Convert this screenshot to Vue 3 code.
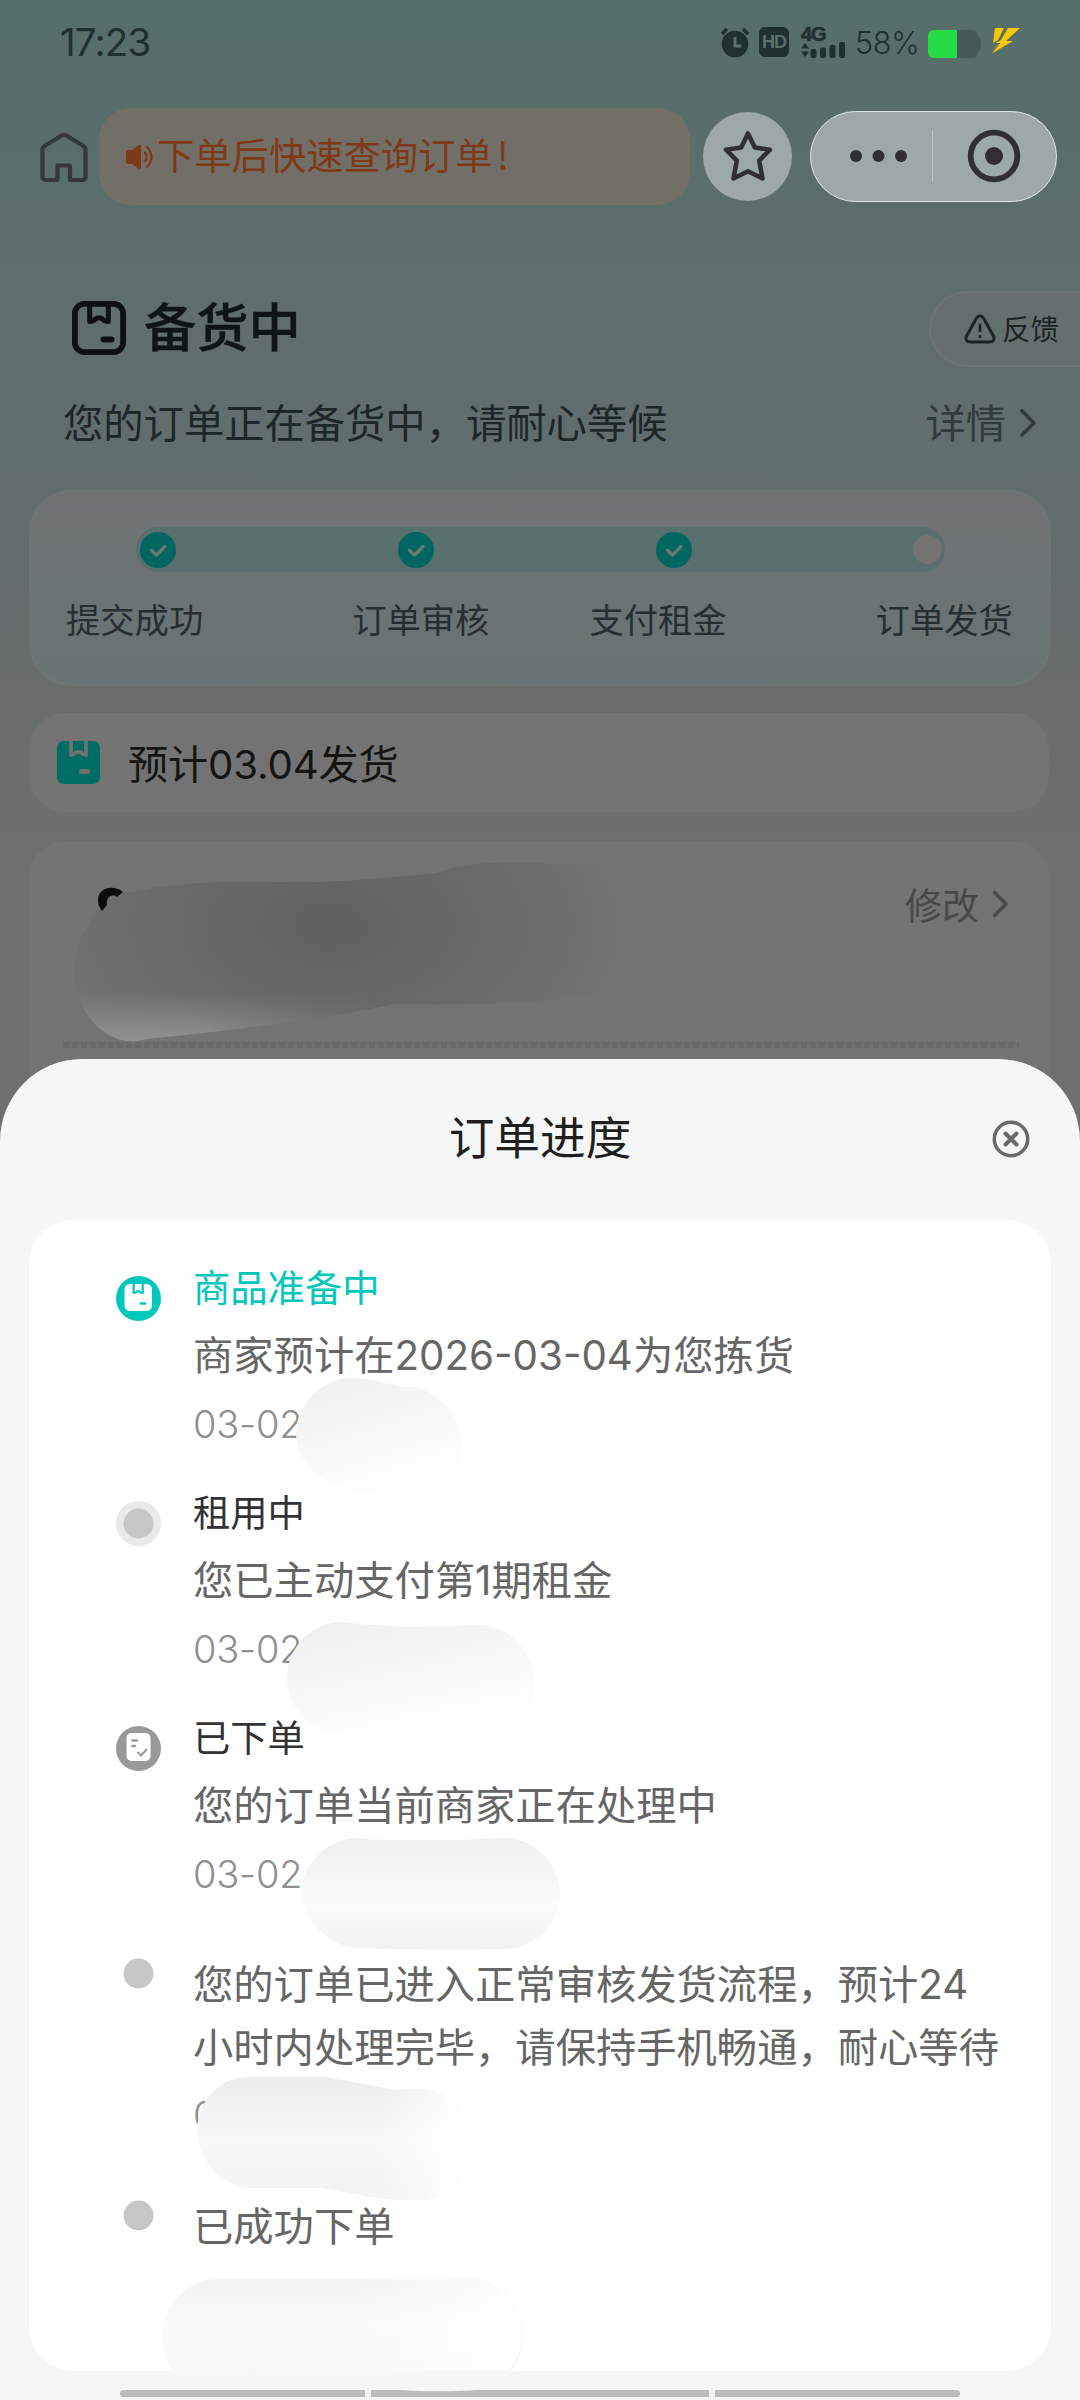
<script setup>
const steps = ['提交成功', '订单审核', '支付租金', '订单发货']
const events = [
  { icon: 'box', title: '商品准备中', active: true, text: ['商家预计在2026-03-04为您拣货'], date: '03-02' },
  { icon: 'ring', title: '租用中', text: ['您已主动支付第1期租金'], date: '03-02' },
  { icon: 'doc', title: '已下单', text: ['您的订单当前商家正在处理中'], date: '03-02' },
  { icon: 'dot', tall: true, text: ['您的订单已进入正常审核发货流程，预计24', '小时内处理完毕，请保持手机畅通，耐心等待'], date: '0' },
  { icon: 'dot', text: ['已成功下单'] },
]
</script>

<template>
  <div class="page">
    <header class="status">
      <span class="clock">17:23</span>
      <div class="status-icons">
        <svg class="alarm" width="30" height="32" viewBox="0 0 30 32">
          <circle cx="15" cy="18" r="13.3" fill="#1f3030" />
          <path d="M2 8 7 3M28 8l-5-5" stroke="#1f3030" stroke-width="3.4" />
          <path d="M15 11v9h6" fill="none" stroke="#5a706e" stroke-width="3" />
        </svg>
        <span class="hd">HD</span>
        <div class="signal">
          <span class="net">4G</span>
          <svg width="46" height="16" viewBox="0 0 46 16" fill="#1f3030">
            <path d="M0 6.5 4 1l4 5.500zM0 9.500h8L4 15z" />
            <rect x="9.500" y="7" width="6" height="9" rx="2" /><rect x="19" y="5.500" width="6" height="10.500" rx="2" />
            <rect x="28.500" y="3" width="6" height="13" rx="2" /><rect x="38" y="0" width="6" height="16" rx="2" />
          </svg>
        </div>
        <span class="percent">58%</span>
        <svg class="battery" width="54" height="28" viewBox="0 0 54 28">
          <path d="M29 0h15q6 0 6 6 3 2 3 8t-3 8q0 6-6 6H29z" fill="#455857" />
          <path d="M6 0h23v28H6q-6 0-6-6V6q0-6 6-6z" fill="#25dc47" />
        </svg>
        <svg class="bolt" width="31" height="27" viewBox="0 0 31 27">
          <path d="M5 0h9L8 12 3 15zM18 0h12L16 13h7L1 26l7-10H4l7-4z" fill="#f5c800" />
          <path d="M2 15.500h8M10 15 1 26" stroke="#586e6b" stroke-width="1" />
        </svg>
      </div>
    </header>

    <nav class="nav">
      <svg class="home" width="48" height="52" viewBox="0 0 48 52">
        <path d="M17.500 49H6q-3.500 0-3.500-3.500V18.500q0-2 2-3.500L22 4.200q2-1.200 4 0l17.500 10.800q2 1.500 2 3.500v27q0 3.500-3.500 3.500H30V34.500H17.500z" fill="none" stroke="#33383b" stroke-width="4.200" stroke-linejoin="round" />
        <path d="M20 46h7.700V54H20z" fill="#586e6b" />
      </svg>
      <div class="notice">
        <svg width="31" height="26" viewBox="0 0 31 26">
          <path d="M0 8q0-2 2-2h4l6-4.500q3-2 3 1v21q0 3-3 1L6 20H2q-2 0-2-2z" fill="#7f3818" />
          <path d="M18.500 8q4.500 5 0 10M20.500 2.500q10 10.500 0 21" fill="none" stroke="#7f3818" stroke-width="2.200" />
        </svg>
        <span>下单后快速查询订单<b>!</b></span>
      </div>
      <div class="star">
        <svg width="52" height="54" viewBox="0 0 52 54">
          <path d="M26 4.500 32.800 18.500 48 20.700 37.200 31.600 40.500 49.500 26 42.300 11.500 49.500 14.800 31.600 4 20.700 19.200 18.500z" fill="none" stroke="#303034" stroke-width="4.600" stroke-linejoin="round" />
        </svg>
      </div>
      <div class="capsule">
        <svg width="58" height="12" viewBox="0 0 58 12" fill="#303034">
          <circle cx="6" cy="6" r="6" /><circle cx="28.500" cy="6" r="6" /><circle cx="51" cy="6" r="6" />
        </svg>
        <i />
        <svg class="target" width="54" height="54" viewBox="0 0 54 54">
          <circle cx="27" cy="27" r="23.300" fill="none" stroke="#303034" stroke-width="5.800" />
          <circle cx="27" cy="27" r="9" fill="#303034" />
        </svg>
      </div>
    </nav>

    <section class="headline">
      <svg class="headline-icon" width="54" height="54" viewBox="0 0 54 54" fill="none" stroke="#0d1112">
        <rect x="2.900" y="2.900" width="48.200" height="48.200" rx="9.500" stroke-width="5.800" />
        <path d="M17.700 4v16.500q4 0 5.500-2.300 1.500-1.500 3.800-1.500t3.800 1.500q1.500 2.300 5.500 2.300V4" stroke-width="5" stroke-linejoin="round" />
        <path d="M31.500 38.500h8" stroke-width="6" stroke-linecap="round" />
      </svg>
      <h1>备货中</h1>
      <div class="feedback">
        <svg width="32" height="30" viewBox="0 0 32 30" fill="none" stroke="#1b2524" stroke-width="3">
          <path d="M12.500 4q3.500-4.500 7 0l10 18q2 5.500-3.500 6H6q-5.500-.5-3.500-6z" />
          <path d="M16 9.500v8.500M16 21v3" stroke-width="2.600" />
        </svg>
        <span>反馈</span>
      </div>
    </section>

    <section class="summary">
      <span>您的订单正在备货中，请耐心等候</span>
      <span class="detail">详情
        <svg width="18" height="30" viewBox="0 0 18 30"><path d="M3 3l12 12L3 27" fill="none" stroke="#303c3b" stroke-width="3.600" stroke-linecap="round" stroke-linejoin="round" /></svg>
      </span>
    </section>

    <section class="progress">
      <div class="track">
        <svg v-for="n in 3" :key="n" width="36" height="36" viewBox="0 0 36 36">
          <circle cx="18" cy="18" r="18" fill="#00665f" />
          <path d="M11.500 18.500l5 4.500 8.500-8.500" fill="none" stroke="#6c7876" stroke-width="3.400" stroke-linecap="round" stroke-linejoin="round" />
        </svg>
        <i />
      </div>
      <div class="labels"><span v-for="s in steps" :key="s">{{ s }}</span></div>
    </section>

    <section class="shipping">
      <svg width="43" height="43" viewBox="0 0 43 43">
        <rect width="43" height="43" rx="7" fill="#006d65" />
        <path d="M14 0v14q3.500-.5 4.500-2.300 1-.8 3-.8t3 .8q1 1.800 4.500 2.300V0" fill="none" stroke="#707070" stroke-width="3.800" stroke-linejoin="round" />
        <path d="M24.500 30.500h6" stroke="#707070" stroke-width="5" stroke-linecap="round" />
      </svg>
      <span>预计03.04发货</span>
    </section>

    <section class="address">
      <div class="modify">修改
        <svg width="17" height="28" viewBox="0 0 17 28"><path d="M2.500 2.500 14 14 2.500 25.500" fill="none" stroke="#484848" stroke-width="3.300" stroke-linecap="round" stroke-linejoin="round" /></svg>
      </div>
      <div class="dotted" />
    </section>

    <!-- brushed cover over the recipient address -->
    <svg class="smudge" width="1080" height="220" viewBox="0 860 1080 220">
      <defs>
        <radialGradient id="dark" gradientUnits="userSpaceOnUse" cx="0" cy="0" r="1" gradientTransform="translate(330 925) scale(290 170)">
          <stop offset="0" stop-color="#616161" /><stop offset=".3" stop-color="#656565" /><stop offset=".7" stop-color="#6c6c6c" /><stop offset="1" stop-color="#727272" />
        </radialGradient>
        <linearGradient id="shine" x1="0" y1="990" x2="0" y2="1040" gradientUnits="userSpaceOnUse">
          <stop offset="0" stop-color="#8f8f8f" stop-opacity="0" /><stop offset="1" stop-color="#929292" />
        </linearGradient>
        <linearGradient id="shineFade" x1="73" x2="390" y1="0" y2="0" gradientUnits="userSpaceOnUse">
          <stop offset="0" stop-color="#fff" /><stop offset=".4" stop-color="#fff" /><stop offset="1" stop-color="#000" />
        </linearGradient>
        <mask id="fade" maskUnits="userSpaceOnUse" x="0" y="860" width="1080" height="220"><rect y="860" width="1080" height="220" fill="url(#shineFade)" /></mask>
      </defs>
      <path d="M125 892Q175 881 235 881H320Q370 879 436 872C460 864 480 861 520 861.500Q600 864 680 866Q708 872 704 920V960Q690 985 570 997Q500 1005 395 1003Q300 1023 146 1038C117 1048 80 1025 74 980Q72 945 88 925Q96 902 125 892z" fill="url(#dark)" transform="translate(0 1)" />
      <path d="M74 975H395V1003Q300 1023 146 1038C117 1048 80 1025 74 975z" fill="url(#shine)" mask="url(#fade)" transform="translate(0 1)" />
      <path d="M98 900C98 888 113 884 123 892L117 897C111 893 106 898 107 905L102 911Q98 906 98 900z" fill="#0c0c0c" />
    </svg>

    <main class="sheet">
      <div class="sheet-head">
        <h2>订单进度</h2>
        <svg class="close" width="38" height="38" viewBox="0 0 38 38" fill="none" stroke="#686a69">
          <circle cx="19" cy="19" r="16.700" stroke-width="3.500" />
          <path d="M13.500 13.500l11 11M24.500 13.500l-11 11" stroke-width="4" stroke-linecap="round" />
        </svg>
      </div>
      <div class="timeline">
        <article v-for="(e, i) in events" :key="i" class="event" :class="{ tall: e.tall, plain: !e.title }">
          <div class="marker">
            <svg v-if="e.icon === 'box'" width="45" height="45" viewBox="0 0 45 45">
              <circle cx="22.500" cy="22.500" r="22.500" fill="#00c7bb" />
              <rect x="8.500" y="8" width="27.500" height="27" rx="5.500" fill="#fff" />
              <path d="M17.700 8v9q2.500 0 3-1.300 1.500-1.300 3 0 .5 1.300 3 1.300V8" fill="none" stroke="#00c7bb" stroke-width="2.200" />
              <path d="M25 27.500h4" stroke="#00c7bb" stroke-width="2.700" stroke-linecap="round" />
            </svg>
            <svg v-else-if="e.icon === 'ring'" width="45" height="45" viewBox="0 0 45 45">
              <circle cx="22.500" cy="22.500" r="22.500" fill="#e9e9e9" /><circle cx="22.500" cy="22.500" r="15" fill="#c6c6c6" />
            </svg>
            <svg v-else-if="e.icon === 'doc'" width="45" height="45" viewBox="0 0 45 45">
              <circle cx="22.500" cy="22.500" r="22.500" fill="#999" />
              <rect x="10.500" y="7" width="24" height="28" rx="5" fill="#fff" />
              <path d="M16.500 14.500h4.500M16.500 20h2.500" stroke="#999" stroke-width="2.700" stroke-linecap="round" />
              <path d="M21.500 26l3.500 3.500 6-6.500" fill="none" stroke="#999" stroke-width="2" />
            </svg>
            <svg v-else width="45" height="45" viewBox="0 0 45 45"><circle cx="22.500" cy="22.500" r="15" fill="#c6c6c6" /></svg>
          </div>
          <div class="body">
            <h3 v-if="e.title" :class="{ active: e.active }">{{ e.title }}</h3>
            <p><span v-for="t in e.text" :key="t">{{ t }}</span></p>
            <time v-if="e.date">{{ e.date }}</time>
          </div>
        </article>
      </div>
      <div class="bars"><i /><i /><i /></div>

      <!-- brushed covers over the timestamps -->
      <svg class="covers" width="1080" height="1341" viewBox="0 1059 1080 1341">
        <defs>
          <linearGradient id="a" x1=".2" y1="0" x2=".65" y2="1"><stop offset="0" stop-color="#f0f0f0" /><stop offset=".5" stop-color="#f8f8f8" /><stop offset="1" stop-color="#fff" /></linearGradient>
          <linearGradient id="b" x1="0" y1="0" x2="0" y2="1"><stop offset="0" stop-color="#f0f0f0" /><stop offset=".6" stop-color="#fbfbfb" /><stop offset="1" stop-color="#f2f2f2" /></linearGradient>
          <linearGradient id="d" x1="0" y1="0" x2="0" y2="1"><stop offset="0" stop-color="#ececec" /><stop offset=".5" stop-color="#f8f8f8" /><stop offset="1" stop-color="#f3f3f3" /></linearGradient>
          <linearGradient id="dx" x1="0" y1="0" x2="1" y2="0"><stop offset=".65" stop-color="#fff" stop-opacity="0" /><stop offset="1" stop-color="#fff" /></linearGradient>
          <linearGradient id="f" x1="0" y1="0" x2="0" y2="1"><stop offset="0" stop-color="#f3f3f3" /><stop offset=".4" stop-color="#fafafa" /><stop offset="1" stop-color="#f5f7f6" /></linearGradient>
          <linearGradient id="fx" x1="0" y1="0" x2="1" y2="0"><stop offset=".5" stop-color="#fff" stop-opacity="0" /><stop offset="1" stop-color="#fff" /></linearGradient>
        </defs>
        <path d="M296 1434C296 1404 322 1378 351 1378Q367 1378 378 1382L405 1387C438 1386 462 1418 462 1442Q461 1490 420 1496Q390 1496 345 1488C315 1482 296 1456 296 1434z" fill="url(#a)" />
        <path d="M287 1677C288 1645 314 1622 342 1622Q360 1625 410 1627L480 1625C508 1625 534 1653 535 1680Q533 1737 480 1738L385 1738Q350 1736 330 1733C306 1728 287 1704 287 1677z" fill="url(#a)" />
        <path d="M302 1892C302 1862 329 1838 358 1838Q370 1840 400 1840H465Q485 1838 505 1838C535 1838 560 1866 560 1893C560 1922 536 1948 507 1949Q430 1951 357 1948C327 1946 302 1919 302 1892z" fill="url(#b)" />
        <path d="M197 2128C200 2098 220 2077 250 2077H325Q350 2081 395 2090Q410 2088 425 2089C450 2092 470 2115 470 2142C468 2180 450 2199 420 2200Q385 2201 360 2195L320 2188H248C220 2185 198 2160 197 2128z" fill="url(#d)" />
        <path d="M197 2128C200 2098 220 2077 250 2077H325Q350 2081 395 2090Q410 2088 425 2089C450 2092 470 2115 470 2142C468 2180 450 2199 420 2200Q385 2201 360 2195L320 2188H248C220 2185 198 2160 197 2128z" fill="url(#dx)" />
        <path d="M163 2335C163 2303 190 2279 219 2279H470C500 2279 524 2306 524 2335Q520 2375 492 2388Q470 2392 420 2391L400 2390H190Q163 2370 163 2335z" fill="url(#f)" />
        <path d="M163 2335C163 2303 190 2279 219 2279H470C500 2279 524 2306 524 2335Q522 2355 508 2370H180Q163 2360 163 2335z" fill="url(#fx)" opacity=".8" />
      </svg>
    </main>
  </div>
</template>

<style>
html, body { margin: 0; background: #6d706e; }
</style>

<style scoped>
* { box-sizing: border-box; }
h1, h2, h3, p { margin: 0; font-weight: 400; }
svg { display: block; flex: none; }
.page {
  position: relative; width: 1080px; height: 2400px; overflow: hidden;
  font-family: Inter, "Noto Sans CJK SC", sans-serif; white-space: nowrap;
  background: linear-gradient(180deg, #566e69 0, #5a6e6c 190px, #5f6e6c 330px, #606e6d 470px, #666d6c 600px, #6a6e6c 720px, #6d706e 850px, #6d706e 1059px);
}
.status { height: 84px; display: flex; justify-content: space-between; padding: 0 59px 0 60px; align-items: center; color: #1f3030; }
.clock { font-size: 38.5px; line-height: 84px; letter-spacing: -.8px; }
.status-icons { display: flex; align-items: center; height: 84px; }
.hd { margin-left: 9px; width: 30px; height: 30px; border-radius: 6px; background: #1f3030; color: #5a706e; font: 700 18px/30px "Liberation Sans", sans-serif; text-align: center; letter-spacing: -1px; }
.signal { width: 46px; margin-left: 12px; display: flex; flex-direction: column; }
.net { font: 700 20px/15px "Liberation Sans", sans-serif; letter-spacing: -1px; -webkit-text-stroke: .6px #1f3030; }
.percent { margin-left: 8px; font-size: 30.5px; font-weight: 300; width: 62px; letter-spacing: -.3px; line-height: 32px; padding-top: 2px; }
.battery { margin-left: 11px; margin-top: 3px; }
.bolt { margin-left: 8px; margin-top: -1px; }
.nav { display: flex; align-items: center; height: 98px; margin-top: 24px; padding-left: 40px; }
.home { margin-top: -1px; }
.notice { width: 591px; height: 97px; margin-top: -1px; margin-left: 11px; border-radius: 32px; background: #726f67; display: flex; align-items: center; padding-left: 27px; color: #7f3818; font-size: 37.3px; }
.notice span { line-height: 60px; margin-top: -2px; }
.notice b { font-weight: 400; margin-left: 4px; font-family: "Noto Sans CJK SC", sans-serif; }
.star { width: 89px; height: 89px; margin-top: -2px; margin-left: 13px; border-radius: 50%; background: #9ca9a7; display: flex; align-items: center; justify-content: center; }
.capsule { width: 247px; height: 91px; margin-top: -2px; margin-left: 18px; border: 1.500px solid #dce8e6; border-radius: 46px; background: #9da9a8; display: flex; align-items: center; padding-left: 39px; }
.capsule i { width: 1px; height: 50px; margin-left: 24px; background: #bdc7c5; }
.target { margin-left: 34px; margin-top: -1px; }
.headline { display: flex; align-items: center; height: 76px; margin-top: 85px; padding-left: 72px; }
.headline-icon { margin-top: -2px; }
.headline h1 { margin-left: 18px; margin-top: -3px; font-size: 52.3px; line-height: 76px; color: #0d1515; font-weight: 450; flex: 1; -webkit-text-stroke: .4px #0d1515; }
.feedback { width: 151px; height: 76px; margin-top: -1px; border: 2.500px solid #6c7573; border-right: 0; border-radius: 38px 0 0 38px; background: #656f6d; display: flex; align-items: center; padding-left: 33px; color: #1b2524; font-size: 28.500px; }
.feedback span { margin-left: 6px; margin-top: -3px; }
.summary { display: flex; justify-content: space-between; height: 60px; line-height: 60px; margin-top: 27px; padding: 0 43px 0 63px; font-size: 40.300px; color: #1c2727; }
.detail { display: flex; align-items: center; color: #303c3b; gap: 13px; }
.detail svg { margin-top: -3px; }
.progress { width: 1022px; height: 196px; margin: 36px 0 0 29px; border: 3px solid #6e7674; border-radius: 42px; background: linear-gradient(180deg, #707272 0, #6c7473 45%, #677372 100%); padding: 34px 34px 0; }
.track { width: 809px; height: 45px; margin-left: 70px; border-radius: 23px; background: #586f6e; display: flex; align-items: center; padding: 0 3px 0 4px; gap: 222px; }
.track i { width: 29px; height: 29px; border-radius: 50%; background: #757272; margin-left: -1px; }
.labels { display: flex; margin-top: 24px; font-size: 34.300px; line-height: 50px; color: #252e30; }
.labels span:nth-child(2) { margin-left: 149px; }
.labels span:nth-child(3) { margin-left: 100px; }
.labels span:nth-child(4) { margin-left: 149px; }
.shipping { width: 1020px; height: 99px; margin: 27px 0 0 29px; border-radius: 36px; background: #737373; display: flex; align-items: center; padding-left: 28px; font-size: 40.200px; color: #141414; letter-spacing: -.15px; }
.shipping span { margin-left: 28px; margin-top: -3px; }
.address { width: 1020px; height: 300px; margin: 29px 0 0 29px; border-radius: 36px; background: #737373; padding: 39px 40px 0 34px; }
.modify { display: flex; justify-content: flex-end; align-items: center; gap: 13px; height: 48px; font-size: 37px; color: #484848; }
.dotted { height: 6px; margin-top: 114px; margin-right: -10px; background: repeating-linear-gradient(90deg, #696969 0 6px, #707070 6px 9px); }
.smudge { position: absolute; left: 0; top: 860px; }
.sheet { position: absolute; left: 0; top: 1059px; width: 1080px; height: 1341px; border-radius: 82px 82px 0 0; background: #f5f7f6; }
.sheet-head { height: 160px; display: flex; align-items: center; padding: 0 50px 0 88px; }
.sheet-head h2 { flex: 1; text-align: center; font-size: 45.700px; line-height: 70px; color: #1e1e1e; margin-top: -1px; }
.timeline { width: 1022px; height: 1151px; margin: 1px 0 0 29px; border-radius: 44px; background: #fff; padding: 43px 0 0 87px; }
.event { height: 225px; display: flex; }
.event.tall { height: 242px; }
.marker { width: 45px; padding-top: 13px; }
.body { margin-left: 32px; padding-top: 1px; }
.body h3 { font-size: 37.300px; line-height: 50px; color: #333; }
.body h3.active { color: #00c7bb; }
.body p { margin-top: 11px; font-size: 40.300px; line-height: 62.5px; color: #666; }
.plain .body p { padding-top: 4px; }
.body p span { display: block; }
.body time { display: block; margin-top: 11px; font-size: 38px; line-height: 50px; font-weight: 350; color: #8f8f8f; letter-spacing: -.2px; }
.bars { display: flex; gap: 6px; margin: 19px 0 0 120px; }
.bars i { height: 7px; width: 245px; background: #babdbb; border-radius: 4px 0 0 4px; }
.bars i:nth-child(2) { width: 338px; border-radius: 0; }
.bars i:nth-child(3) { border-radius: 0 4px 4px 0; }
.covers { position: absolute; left: 0; top: 0; }
</style>
